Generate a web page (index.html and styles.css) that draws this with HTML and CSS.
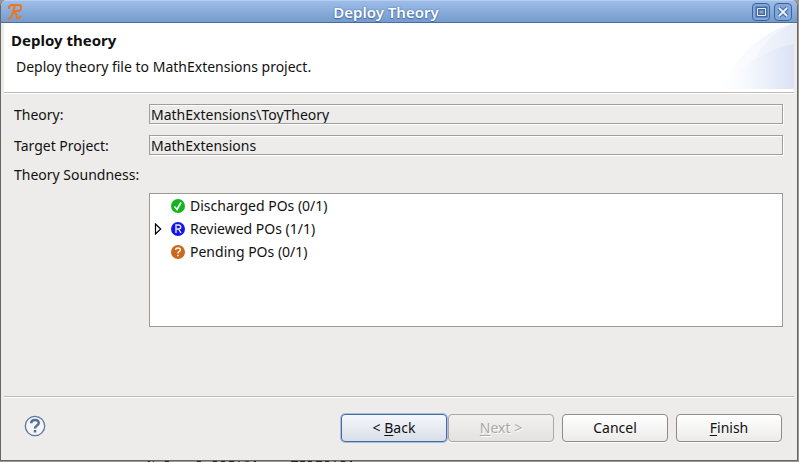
FILE: index.html
```html
<!DOCTYPE html>
<html lang="en">
<head>
<meta charset="utf-8">
<title>Deploy Theory</title>
<link rel="stylesheet" href="styles.css">
</head>
<body>
<main class="window">
  <header class="titlebar">
    <svg class="app-icon" width="16" height="18" viewBox="0 0 16 18" aria-hidden="true"><path d="M2 6V4L4 2H13L14 3V6L12 8H7M8 2L6 9L4 15L1 16M7 9L9 11L10 15H12L14 13"/></svg>
    <h1 class="window-title">Deploy Theory</h1>
    <div class="window-controls">
      <button class="control" aria-label="Maximize"><svg width="16" height="16" viewBox="0 0 16 16"><path class="halo" d="M4.500 4.500H12.500V11.500H4.500Z"/><path class="mark" d="M4.500 4.500H12.500V11.500H4.500Z"/></svg></button>
      <button class="control" aria-label="Close"><svg width="16" height="16" viewBox="0 0 16 16"><path class="halo" d="M4 4L12 12M12 4L4 12"/><path class="mark cross" d="M4 4L12 12M12 4L4 12"/></svg></button>
    </div>
  </header>
  <section class="banner">
    <div class="banner-text">
      <h2 class="heading">Deploy theory</h2>
      <p class="description">Deploy theory file to MathExtensions project.</p>
    </div>
    <svg class="banner-art" width="74" height="66" viewBox="0 0 74 66" aria-hidden="true">
      <defs>
        <linearGradient id="sweep"><stop offset="0" stop-color="#fff"/><stop offset="1" stop-color="#eef2fb"/></linearGradient>
        <linearGradient id="veil"><stop offset="0" stop-color="#f3f6fc"/><stop offset="1" stop-color="#e5ebf8"/></linearGradient>
        <linearGradient id="fold"><stop offset="0" stop-color="#fff"/><stop offset=".35" stop-color="#f5f8fd"/><stop offset="1" stop-color="#dae2f5"/></linearGradient>
      </defs>
      <path fill="url(#sweep)" d="M0 66Q26 13 74 0V66Z"/>
      <path fill="url(#veil)" d="M36 36Q46 12 74 0V40Z"/>
      <path fill="url(#fold)" d="M4 66Q30 30 74 21V66Z"/>
    </svg>
  </section>
  <form class="content">
    <label for="theory">Theory:</label>
    <input class="field" id="theory" type="text" value="MathExtensions\ToyTheory" readonly>
    <label for="project">Target Project:</label>
    <input class="field" id="project" type="text" value="MathExtensions" readonly>
    <span class="soundness" id="soundness">Theory Soundness:</span>
    <ul class="tree" aria-labelledby="soundness">
      <li class="node">
        <span class="twisty"></span>
        <svg width="14" height="14" viewBox="0 0 14 14" aria-hidden="true"><circle cx="7" cy="7" r="7" fill="#12b51c"/><path d="M3.500 7.500L6 10.500L10 3.500" fill="none" stroke="#fff" stroke-width="1.700"/></svg>
        <span>Discharged POs (0/1)</span>
      </li>
      <li class="node">
        <button class="twisty" type="button" aria-label="Expand Reviewed POs"><svg width="8" height="12" viewBox="0 0 8 12"><path d="M1.500 1V11L6.700 6Z" fill="#fff" stroke="#000" stroke-width="1.200"/></svg></button>
        <svg width="14" height="14" viewBox="0 0 14 14" aria-hidden="true"><circle cx="7" cy="7" r="7" fill="#1414ed"/><path d="M5 11V3H7.500Q9.700 3 9.700 5T7.500 7H5M7.500 7L10 11" fill="none" stroke="#e8e8ff" stroke-width="1.400"/></svg>
        <span>Reviewed POs (1/1)</span>
      </li>
      <li class="node">
        <span class="twisty"></span>
        <svg width="14" height="14" viewBox="0 0 14 14" aria-hidden="true"><circle cx="7" cy="7" r="7" fill="#cb6a1e"/><path d="M4.700 5Q4.700 3 7 3T9.300 5Q9.300 6 8 6.700Q7 7.300 7 8.500M7 9.800V11.300" fill="none" stroke="#fff" stroke-width="1.400"/></svg>
        <span>Pending POs (0/1)</span>
      </li>
    </ul>
  </form>
  <footer class="actions">
    <button class="help" type="button" aria-label="Help"><svg width="22" height="22" viewBox="0 0 22 22"><circle cx="11" cy="11" r="9.700" fill="#f3f5f8" stroke="#5d789c" stroke-width="1.300"/><path d="M7.200 8.300Q7.200 5 11 5T14.700 8Q14.700 9.500 12.700 10.700Q11 11.700 11 13.500M11 15V17.500" fill="none" stroke="#566f94" stroke-width="2.500"/></svg></button>
    <div class="steps">
      <button class="button primary" type="button"><span>&lt; <u>B</u>ack</span></button>
      <button class="button" type="button" disabled><span><u>N</u>ext &gt;</span></button>
    </div>
    <button class="button" type="button">Cancel</button>
    <button class="button" type="button"><span><u>F</u>inish</span></button>
  </footer>
</main>
</body>
</html>
```
FILE: styles.css
```css
* {
  box-sizing: border-box;
}

body {
  margin: 0;
  min-height: 100vh;
  padding-bottom: 1px;
  display: flex;
  background:
    linear-gradient(90deg,
      transparent 148px, #222 148px 150px, transparent 150px 153px,
      #222 153px 154px, transparent 154px 165px, #222 165px 169px,
      transparent 169px 197px, #222 197px 201px, transparent 201px 213px,
      #222 213px 217px, transparent 217px 221px, #222 221px 225px,
      transparent 225px 229px, #222 229px 234px, transparent 234px 238px,
      #555 238px 240px, transparent 240px 245px, #444 245px 249px,
      transparent 249px 254px, #222 254px 256px, transparent 256px 291px,
      #222 291px 298px, transparent 298px 300px, #222 300px 305px,
      transparent 305px 308px, #222 308px 312px, transparent 312px 316px,
      #222 316px 322px, transparent 322px 325px, #222 325px 329px,
      transparent 329px 334px, #444 334px 336px, transparent 336px 341px,
      #222 341px 345px, transparent 345px 350px, #222 350px 352px,
      transparent 352px) bottom / 100% 1px no-repeat,
    #9b9895;
  color: #111;
  font: 14px/20px "Noto Sans", sans-serif;
}

h1, h2, p, ul {
  margin: 0;
  padding: 0;
}

button, input {
  font: inherit;
  color: inherit;
}

.window {
  flex: 1;
  display: flex;
  flex-direction: column;
  margin-right: 1px;
  background: #edeceb;
  border: solid #686663;
  border-width: 0 1px 1px;
  border-radius: 6px 6px 0 0;
  overflow: hidden;
}

.titlebar {
  height: 23px;
  display: grid;
  grid-template-columns: 45px 1fr 45px;
  align-items: center;
  background: linear-gradient(#9dbde8, #759ccd);
  border-top: 1px solid #b6cff0;
  border-bottom: 1px solid #486fa5;
}

.app-icon {
  margin-left: 6px;
  fill: none;
  stroke: #ed7420;
  stroke-width: 2;
}

.window-title {
  padding-right: 26px;
  text-align: center;
  color: #fff;
  font-size: 15px;
  font-weight: 600;
  text-shadow: 0 1px 1px #426ba4, 0 0 2px #426ba4;
}

.window-controls {
  display: flex;
  gap: 4px;
}

.control {
  width: 18px;
  height: 18px;
  padding: 0;
  display: grid;
  place-items: center;
  border: 1px solid #3e659b;
  border-radius: 4px;
  background: #83a7d8;
}

.control path {
  fill: none;
}

.control .halo {
  stroke: #426aa2;
  stroke-width: 4;
}

.control .mark {
  stroke: #eaf1fc;
  stroke-width: 1;
}

.control .cross {
  stroke-width: 2;
}

.banner {
  height: 70px;
  margin: 0 3px;
  display: flex;
  justify-content: space-between;
  background: #fff;
  border-bottom: 1px solid #bdbbb8;
  box-shadow: 0 1px #fff;
}

.banner-text {
  padding: 7px 7px 0;
}

.heading {
  font-size: 15px;
  font-weight: 700;
}

.description {
  padding: 7px 5px 0;
}

.content {
  flex: 1;
  display: grid;
  grid-template-columns: 127px 1fr;
  grid-template-rows: 21px 21px 17px 134px;
  gap: 10px 8px;
  align-content: start;
  padding: 11px 14px 0 13px;
}

.content label {
  line-height: 22px;
}

.field {
  width: 100%;
  height: 20px;
  padding: 1px 1px 0;
  border: 1px solid #a09e9b;
  border-radius: 0;
  background: transparent;
  box-shadow: inset 0 1px #fff, 1px 1px #fff;
  outline: 0;
}

.soundness {
  grid-column: 1 / -1;
  line-height: 18px;
}

.tree {
  grid-column: 2;
  list-style: none;
  background: #fff;
  border: 1px solid #9c9a97;
}

.node {
  height: 23px;
  display: flex;
  align-items: center;
  gap: 5px;
}

.twisty {
  width: 16px;
  height: 12px;
  padding: 0 0 0 4px;
  border: 0;
  background: none;
  display: flex;
}

.actions {
  height: 64px;
  margin: 0 3px;
  padding: 17px 12px 0 20px;
  display: flex;
  gap: 8px;
  border-top: 1px solid #bdbbb8;
  box-shadow: inset 0 1px #fff;
}

.help {
  width: 22px;
  height: 22px;
  margin: 1px auto 0 0;
  padding: 0;
  border: 0;
  background: none;
}

.steps {
  display: flex;
  gap: 1px;
}

.button {
  width: 106px;
  height: 28px;
  padding: 0;
  border: 1px solid #8e8b88;
  border-radius: 4px;
  background: linear-gradient(#fff, #ecebea);
  box-shadow: 0 1px #f9f8f8;
}

.button u {
  text-underline-offset: 2px;
}

.primary {
  border-color: #48699b;
  background: linear-gradient(#f5f8fd, #d9dfe7);
  box-shadow: 0 0 0 1px #a8c0e2;
}

.button:disabled {
  color: #aaa7a5;
  border-color: #aaa7a5;
  background: linear-gradient(#f2f1f0, #e3e2e0);
  text-shadow: 1px 1px #fff;
}
```
